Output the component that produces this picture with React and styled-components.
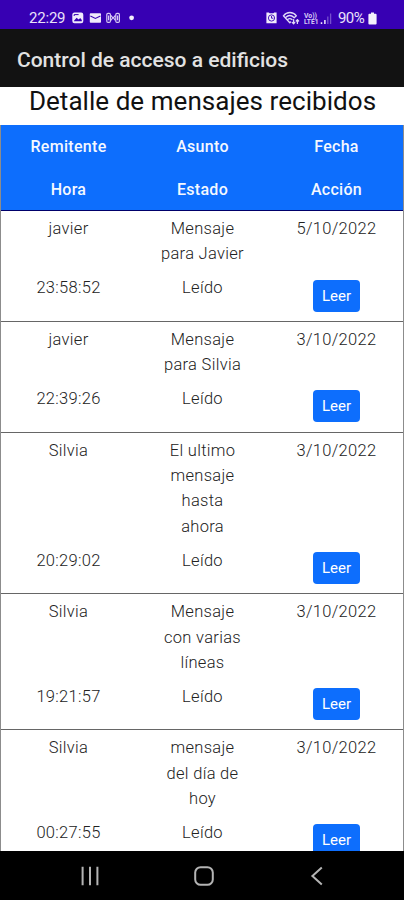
import React from 'react';
import styled, { createGlobalStyle } from 'styled-components';

const messages = [
  { id: 1, sender: 'javier', subject: 'Mensaje para Javier', date: '5/10/2022', time: '23:58:52', status: 'Leído' },
  { id: 2, sender: 'javier', subject: 'Mensaje para Silvia', date: '3/10/2022', time: '22:39:26', status: 'Leído' },
  { id: 3, sender: 'Silvia', subject: 'El ultimo mensaje hasta ahora', date: '3/10/2022', time: '20:29:02', status: 'Leído' },
  { id: 4, sender: 'Silvia', subject: 'Mensaje con varias líneas', date: '3/10/2022', time: '19:21:57', status: 'Leído' },
  { id: 5, sender: 'Silvia', subject: 'mensaje del día de hoy', date: '3/10/2022', time: '00:27:55', status: 'Leído' },
];

const headers = ['Remitente', 'Asunto', 'Fecha', 'Hora', 'Estado', 'Acción'];

const NotificationIcons = () => (
  <svg width="68" height="14" viewBox="0 0 68 14" fill="none">
    <rect x="0.3" y="1.6" width="11" height="10.6" rx="2.2" fill="#f0eafc" />
    <path d="M2 9.8l2.6-3 2 1.8 1.6-1.6L9.8 9v1.2H2z" fill="#3700b3" />
    <path d="M2.2 5V3.6h4.4" stroke="#3700b3" strokeWidth="1" />
    <rect x="17.8" y="2.2" width="11.2" height="9.6" rx="0.8" fill="#f0eafc" />
    <path d="M18.4 5l5 2.4 5-2.4" stroke="#3700b3" strokeWidth="1.1" />
    <g stroke="#d6c8f4" strokeWidth="1.2">
      <rect x="34.8" y="2.4" width="3.6" height="9" rx="1.2" />
      <rect x="43.8" y="2.4" width="3.6" height="9" rx="1.2" />
      <path d="M38.8 4.4l2 2.4-2 2.6M43.4 4.4l-2 2.4 2 2.6M36.6 4.4v4.8M45.6 4.4v4.8" />
    </g>
    <circle cx="59.6" cy="6.8" r="2.4" fill="#f4f0fd" />
  </svg>
);

const SystemIcons = () => (
  <svg width="68" height="16" viewBox="0 0 68 16" fill="none">
    <path d="M0.4 2.4h2.4l.8.8h3.8l.8-.8h2.4v10.8H.4z" fill="#f0eafc" />
    <circle cx="5.5" cy="8" r="3.1" stroke="#3700b3" strokeWidth="0.9" />
    <path d="M5.5 6v2.2h1.8" stroke="#3700b3" strokeWidth="0.9" />
    <g stroke="#e2d9f8" strokeWidth="1.3" strokeLinecap="round" strokeLinejoin="round">
      <path d="M17.4 5.8c3.4-4.4 9.6-4.4 13 0l-2.2 2M17.4 5.8l6.4 7 .8-.8" />
      <path d="M19.6 7.4c2.6-2.4 5.8-2.4 8.4 0M21.6 9.6c1.4-1.2 3-1.2 4.4 0" />
      <path d="M27.6 9.6v4M26.2 12.4l1.4 1.4 1.2-1.4M31.4 13.4V9.8M30.2 11l1.2-1.4 1.2 1.4" />
    </g>
    <text x="38" y="8" fill="#d8cbf5" fontSize="7" fontWeight="700" fontFamily="Roboto, sans-serif" textLength="13" lengthAdjust="spacingAndGlyphs">Vo))</text>
    <text x="38" y="14.4" fill="#d8cbf5" fontSize="7" fontWeight="700" fontFamily="Roboto, sans-serif" textLength="14.5" lengthAdjust="spacingAndGlyphs">LTE1</text>
    <path d="M55.5 14v-1.8M58.9 14v-4" stroke="#f0eafc" strokeWidth="1.5" />
    <path d="M61.8 14V6.6M64.6 14V3.4" stroke="#7650cd" strokeWidth="1.3" />
  </svg>
);

const BatteryIcon = () => (
  <svg width="9" height="13" viewBox="0 0 9 13">
    <path d="M3 .6h3v1.2h1.6q1 0 1 1v8.6q0 1-1 1H1.4q-1 0-1-1V2.8q0-1 1-1H3z" fill="#f4f0fd" />
  </svg>
);

const App = () => {
  return (
    <Screen>
      <GlobalStyle />
      <StatusBar>
        <StatusGroup>
          <Clock>22:29</Clock>
          <NotificationIcons />
        </StatusGroup>
        <StatusGroup>
          <SystemIcons />
          <BatteryLevel>90%</BatteryLevel>
          <BatteryIcon />
        </StatusGroup>
      </StatusBar>

      <AppBar>Control de acceso a edificios</AppBar>

      <Content>
        <Title>Detalle de mensajes recibidos</Title>
        <Table>
          <HeaderRow>
            {headers.map((header) => (
              <HeaderCell key={header}>{header}</HeaderCell>
            ))}
          </HeaderRow>
          {messages.map((message) => (
            <MessageRow key={message.id}>
              <Cell>{message.sender}</Cell>
              <Cell>{message.subject}</Cell>
              <Cell>{message.date}</Cell>
              <Cell>{message.time}</Cell>
              <Cell>{message.status}</Cell>
              <ActionCell>
                <ReadButton type="button">Leer</ReadButton>
              </ActionCell>
            </MessageRow>
          ))}
        </Table>
      </Content>

      <NavBar>
        <svg width="20" height="20" viewBox="0 0 20 20" fill="none" stroke="#b4b4b4" strokeWidth="2">
          <path d="M2.6 .8v18.4M10 .8v18.4M17.4 .8v18.4" />
        </svg>
        <svg width="20" height="20" viewBox="0 0 20 20" fill="none" stroke="#b4b4b4" strokeWidth="2">
          <rect x="1.2" y="1.2" width="17.6" height="17.6" rx="5.4" />
        </svg>
        <svg width="20" height="20" viewBox="0 0 20 20" fill="none" stroke="#b4b4b4" strokeWidth="2">
          <path d="M14.8 1.6L5.4 10l9.4 8.4" />
        </svg>
      </NavBar>
    </Screen>
  );
};

export default App;

const GlobalStyle = createGlobalStyle`
  * {
    box-sizing: border-box;
  }

  body {
    margin: 0;
    font-family: Roboto, sans-serif;
  }
`;

const Screen = styled.div`
  display: flex;
  flex-direction: column;
  width: 404px;
  height: 900px;
  overflow: hidden;
  background-color: #fff;
`;

const StatusBar = styled.div`
  display: flex;
  justify-content: space-between;
  flex: 0 0 29px;
  padding: 7px 27px 0 29px;
  background-color: #3700b3;
  color: #e9e2fa;
`;

const StatusGroup = styled.div`
  display: flex;
  align-items: center;
  height: 22px;
`;

const Clock = styled.span`
  width: 43px;
  font-size: 15px;
  letter-spacing: -0.2px;
`;

const BatteryLevel = styled.span`
  width: 30px;
  margin-left: 4px;
  font-size: 15px;
  letter-spacing: -0.6px;
`;

const AppBar = styled.div`
  display: flex;
  align-items: center;
  flex: 0 0 58px;
  padding: 3px 17px 0;
  background-color: #121212;
  color: #e2e2e2;
  font-size: 21px;
  font-weight: 500;
`;

const Content = styled.div`
  flex: 1;
  min-height: 0;
  overflow: hidden;
`;

const Title = styled.h1`
  height: 38px;
  margin: 0;
  padding-left: 1px;
  color: #111;
  font-size: 26px;
  font-weight: 400;
  letter-spacing: 0.05px;
  line-height: 28px;
  text-align: center;
  white-space: nowrap;
`;

const Table = styled.div`
  border: solid #8c8c8c;
  border-width: 0 1px;
`;

const Row = styled.div`
  display: grid;
  grid-template-columns: repeat(3, 1fr);
  text-align: center;
`;

const HeaderRow = styled(Row)`
  height: 86px;
  border-bottom: 1px solid #00006a;
  background-color: #0d6efd;
`;

const HeaderCell = styled.div`
  padding-left: 1px;
  color: #f4f8ff;
  font-size: 16px;
  font-weight: 500;
  letter-spacing: 0.3px;
  line-height: 43px;
`;

const MessageRow = styled(Row)`
  border-bottom: 1px solid #666;
`;

const Cell = styled.div`
  padding: 5px 23.5px 3.4px 24.5px;
  color: #222;
  font-size: 16.5px;
  font-weight: 300;
  letter-spacing: 0.3px;
  line-height: 25.4px;
`;

const ActionCell = styled.div`
  height: 50.6px;
  padding: 9.4px 0 0 1px;
`;

const ReadButton = styled.button`
  width: 47px;
  height: 32px;
  padding: 0;
  border: 0;
  border-radius: 4px;
  background-color: #0d6efd;
  color: #fff;
  font-family: inherit;
  font-size: 15px;
  font-weight: 400;
`;

const NavBar = styled.div`
  display: flex;
  justify-content: space-between;
  align-items: center;
  flex: 0 0 49px;
  padding: 0 77px 0 80px;
  background-color: #000;
`;
